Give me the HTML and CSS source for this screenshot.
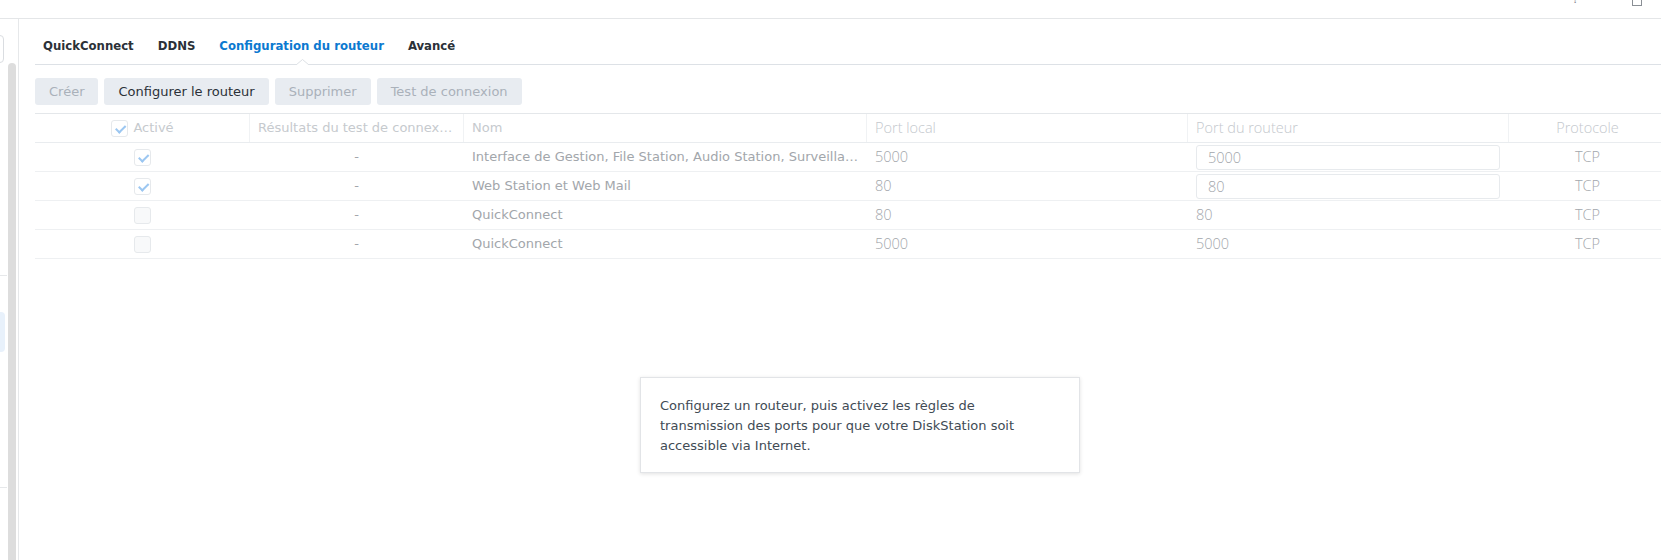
FILE: index.html
```html
<!DOCTYPE html>
<html lang="fr">

<head>
    <meta charset="UTF-8">
    <title>Accès externe</title>
    <link rel="stylesheet" href="styles.css">
</head>

<body>
    <div class="titlebar">
        <span class="title-btn help">?</span>
        <span class="title-btn max"></span>
    </div>

    <div class="window">
        <div class="sidebar">
            <div class="nav">
                <div class="search"></div>
                <div class="nav-sep first"></div>
                <div class="nav-item active"></div>
                <div class="nav-sep"></div>
            </div>
            <div class="scroll-track"></div>
        </div>

        <div class="content">
            <div class="tabs">
                <div class="tab">QuickConnect</div>
                <div class="tab">DDNS</div>
                <div class="tab active">Configuration du routeur
                    <svg class="caret" width="13" height="6" viewBox="0 0 13 6">
                        <polyline points="0,6 6.5,0.5 13,6" fill="#fff" stroke="#dde1e6" stroke-width="1" />
                    </svg>
                </div>
                <div class="tab">Avancé</div>
            </div>

            <div class="toolbar">
                <button class="btn" disabled>Créer</button>
                <button class="btn">Configurer le routeur</button>
                <button class="btn" disabled>Supprimer</button>
                <button class="btn" disabled>Test de connexion</button>
            </div>

            <div class="grid">
                <div class="row head">
                    <div class="cell box">
                        <span class="check checked"></span>
                        <span class="head-label">Activé</span>
                    </div>
                    <div class="cell">Résultats du test de connexion</div>
                    <div class="cell">Nom</div>
                    <div class="cell alt">Port local</div>
                    <div class="cell alt">Port du routeur</div>
                    <div class="cell alt center">Protocole</div>
                </div>

                <div class="row">
                    <div class="cell box"><span class="check checked"></span></div>
                    <div class="cell center">-</div>
                    <div class="cell">Interface de Gestion, File Station, Audio Station, Surveillance Station</div>
                    <div class="cell alt">5000</div>
                    <div class="cell alt field"><span class="port-input">5000</span></div>
                    <div class="cell alt center">TCP</div>
                </div>
                <div class="row">
                    <div class="cell box"><span class="check checked"></span></div>
                    <div class="cell center">-</div>
                    <div class="cell">Web Station et Web Mail</div>
                    <div class="cell alt">80</div>
                    <div class="cell alt field"><span class="port-input">80</span></div>
                    <div class="cell alt center">TCP</div>
                </div>
                <div class="row">
                    <div class="cell box"><span class="check"></span></div>
                    <div class="cell center">-</div>
                    <div class="cell">QuickConnect</div>
                    <div class="cell alt">80</div>
                    <div class="cell alt">80</div>
                    <div class="cell alt center">TCP</div>
                </div>
                <div class="row">
                    <div class="cell box"><span class="check"></span></div>
                    <div class="cell center">-</div>
                    <div class="cell">QuickConnect</div>
                    <div class="cell alt">5000</div>
                    <div class="cell alt">5000</div>
                    <div class="cell alt center">TCP</div>
                </div>
            </div>

            <div class="notice">
                Configurez un routeur, puis activez les règles de transmission des ports pour que votre DiskStation soit accessible via Internet.
            </div>
        </div>
    </div>
</body>

</html>
```

FILE: styles.css
```css
body {
    margin: 0;
    width: 1661px;
    height: 560px;
    overflow: hidden;
    background-color: #fff;
    font-family: "DejaVu Sans", sans-serif;
    font-size: 13px;
    color: #414b55;
}

.titlebar {
    height: 18px;
    border-bottom: 1px solid #e4e6e8;
    display: flex;
    justify-content: flex-end;
    align-items: flex-start;
    padding-right: 19px;
    overflow: hidden;
}

.title-btn {
    color: #8a8f95;
}

.help {
    font-size: 13px;
    line-height: 13px;
    margin-top: -8px;
    margin-right: 53px;
}

.max {
    width: 8px;
    height: 10px;
    border: 1px solid #8a8f95;
    margin-top: -6px;
}

.window {
    display: flex;
    height: 541px;
    position: relative;
}

.sidebar {
    width: 18px;
    flex-shrink: 0;
    display: flex;
    border-right: 1px solid #e6e8ea;
}

.nav {
    width: 8px;
    overflow: hidden;
}

.search {
    width: 200px;
    height: 26px;
    margin-top: 16px;
    margin-left: -198px;
    border: 1px solid #dadde1;
    border-radius: 4px;
}

.nav-sep {
    height: 1px;
    width: 7px;
    background-color: #e6e8ea;
    margin-top: 135px;
}

.nav-sep.first {
    margin-top: 212px;
}

.nav-item.active {
    width: 200px;
    height: 40px;
    margin-left: -195px;
    margin-top: 36px;
    background-color: #e8f1fb;
    border-radius: 4px;
}

.scroll-track {
    width: 8px;
    margin-top: 44px;
    background-color: #dddddd;
    border-radius: 4px 4px 0 0;
}

.content {
    flex: 1;
    padding-left: 16px;
    min-width: 0;
}

.tabs {
    display: flex;
    height: 45px;
    border-bottom: 1px solid #dde1e6;
    padding-left: 8px;
    gap: 24px;
}

.tab {
    position: relative;
    padding-top: 18px;
    line-height: 18px;
    font-weight: bold;
    font-stretch: semi-condensed;
    color: #2b3138;
    white-space: nowrap;
}

.tab.active {
    color: #0b79d0;
}

.caret {
    position: absolute;
    left: 50%;
    bottom: -1px;
    margin-left: -6px;
    display: block;
}

.toolbar {
    display: flex;
    gap: 6px;
    padding-top: 13px;
    margin-bottom: 8px;
}

.btn {
    height: 27px;
    padding: 0 14px;
    border: none;
    border-radius: 3px;
    background-color: #e8ecf1;
    font-family: inherit;
    font-size: 13px;
    color: #2b3138;
}

.btn:disabled {
    color: #aab1ba;
}

.grid {
    width: 1631px;
    border-top: 1px solid #e4e7ea;
}

.row {
    display: grid;
    grid-template-columns: 214px 214px 403px 321px 321px 158px;
    height: 28px;
    border-bottom: 1px solid #eef0f2;
}

.row.head {
    border-bottom-color: #e9ecef;
}

.cell {
    padding: 0 8px;
    line-height: 28px;
    border-left: 1px solid transparent;
    white-space: nowrap;
    overflow: hidden;
    text-overflow: ellipsis;
    color: #a2a6ab;
    min-width: 0;
}

.cell.center {
    text-align: center;
}

.cell.box {
    display: flex;
    align-items: center;
    justify-content: center;
}

.cell.field {
    display: flex;
    align-items: center;
}

.head .cell {
    color: #c6cace;
    border-left-color: #f0f2f4;
}

.head .cell:first-child {
    border-left-color: transparent;
}

.cell.alt {
    font-family: "Open Sans", sans-serif;
    font-weight: 300;
    font-size: 14.5px;
    color: #a2a6ab;
}

.head .cell.alt {
    color: #c4c8cd;
}

.head-label {
    margin-left: 5px;
}

.check {
    width: 15px;
    height: 15px;
    border: 1px solid #e6e9ec;
    border-radius: 3px;
    background-color: #f8f9fa;
    position: relative;
    flex-shrink: 0;
}

.check.checked {
    background-color: #fff;
}

.check.checked::after {
    content: "";
    position: absolute;
    left: 3px;
    top: 2px;
    width: 8px;
    height: 4px;
    border-left: 2px solid #9cc7f1;
    border-bottom: 2px solid #9cc7f1;
    transform: rotate(-45deg) translate(-1px, 2px);
}

.port-input {
    flex: 1;
    height: 25px;
    box-sizing: border-box;
    border: 1px solid #e7eaed;
    border-radius: 3px;
    padding-left: 11px;
    line-height: 23px;
}

.notice {
    position: absolute;
    left: 640px;
    top: 358px;
    width: 400px;
    padding: 18px 19px 16px;
    line-height: 20px;
    background-color: #fff;
    border: 1px solid #e2e4e7;
    box-shadow: 0 1px 4px rgba(0, 0, 0, 0.12);
    color: #414b55;
}
```
